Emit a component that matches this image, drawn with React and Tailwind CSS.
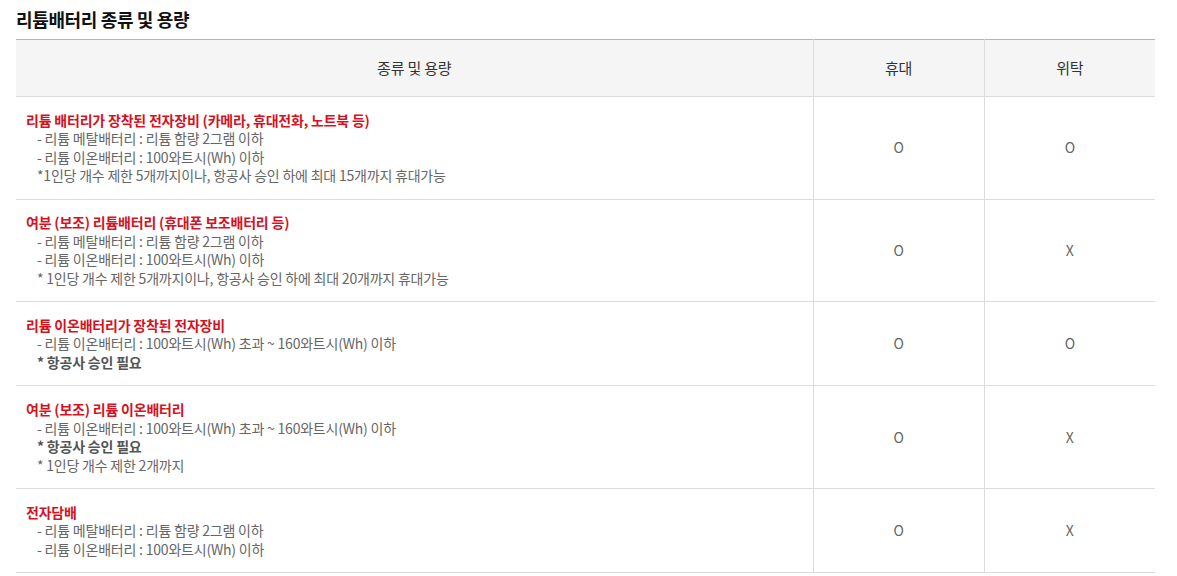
const rows = [
  {
    title: "리튬 배터리가 장착된 전자장비 (카메라, 휴대전화, 노트북 등)",
    lines: [
      { text: "- 리튬 메탈배터리 : 리튬 함량 2그램 이하" },
      { text: "- 리튬 이온배터리 : 100와트시(Wh) 이하" },
      { text: "*1인당 개수 제한 5개까지이나, 항공사 승인 하에 최대 15개까지 휴대가능" },
    ],
    carry: "O",
    check: "O",
  },
  {
    title: "여분 (보조) 리튬배터리 (휴대폰 보조배터리 등)",
    lines: [
      { text: "- 리튬 메탈배터리 : 리튬 함량 2그램 이하" },
      { text: "- 리튬 이온배터리 : 100와트시(Wh) 이하" },
      { text: "* 1인당 개수 제한 5개까지이나, 항공사 승인 하에 최대 20개까지 휴대가능" },
    ],
    carry: "O",
    check: "X",
  },
  {
    title: "리튬 이온배터리가 장착된 전자장비",
    lines: [
      { text: "- 리튬 이온배터리 : 100와트시(Wh) 초과 ~ 160와트시(Wh) 이하" },
      { text: "* 항공사 승인 필요", bold: true },
    ],
    carry: "O",
    check: "O",
  },
  {
    title: "여분 (보조) 리튬 이온배터리",
    lines: [
      { text: "- 리튬 이온배터리 : 100와트시(Wh) 초과 ~ 160와트시(Wh) 이하" },
      { text: "* 항공사 승인 필요", bold: true },
      { text: "* 1인당 개수 제한 2개까지" },
    ],
    carry: "O",
    check: "X",
  },
  {
    title: "전자담배",
    lines: [
      { text: "- 리튬 메탈배터리 : 리튬 함량 2그램 이하" },
      { text: "- 리튬 이온배터리 : 100와트시(Wh) 이하" },
    ],
    carry: "O",
    check: "X",
  },
];

export default function App() {
  return (
    <div className="min-h-[576px] bg-white px-4 pt-[8px] font-['Noto_Sans_CJK_KR','Noto_Sans',sans-serif]">
      <h2 className="text-[18px] font-bold leading-[23px] tracking-[-0.02em] text-[#111]">리튬배터리 종류 및 용량</h2>
      <table className="mt-[8px] w-[1139px] border-collapse border-t border-t-[#b5b5b5] text-[14px] tracking-[-0.015em]">
        <thead>
          <tr className="h-[57px] bg-[#f5f5f5] text-[15px] font-normal text-[#333]">
            <th className="border-b border-[#dcdcdc] font-normal">종류 및 용량</th>
            <th className="w-[171px] border-b border-l border-[#dcdcdc] font-normal">휴대</th>
            <th className="w-[171px] border-b border-l border-[#dcdcdc] font-normal">위탁</th>
          </tr>
        </thead>
        <tbody>
          {rows.map((row) => (
            <tr key={row.title} className="border-b border-[#dcdcdc]">
              <td className="px-[10px] py-[13.8px] align-middle leading-[18.5px]">
                <p className="font-bold text-[#d5121f]">{row.title}</p>
                {row.lines.map((line) => (
                  <p
                    key={line.text}
                    className={`pl-[11px] ${line.bold ? "font-bold text-[#555]" : "text-[#666]"}`}
                  >
                    {line.text}
                  </p>
                ))}
              </td>
              <td className="border-l border-[#dcdcdc] text-center text-[#666]">{row.carry}</td>
              <td className="border-l border-[#dcdcdc] text-center text-[#666]">{row.check}</td>
            </tr>
          ))}
        </tbody>
      </table>
    </div>
  );
}
